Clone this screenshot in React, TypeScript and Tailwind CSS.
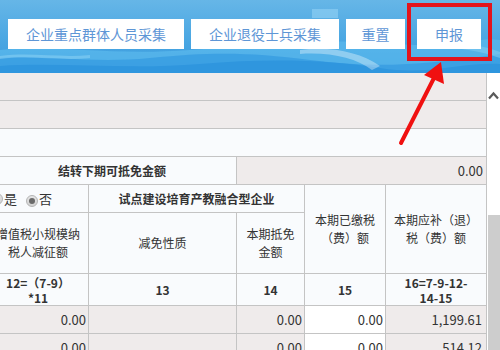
import React from "react";

const G = "bg-[#efebeb]";
const W = "bg-[#f9fbfd]";

function Radio({ checked }: { checked?: boolean }) {
  return (
    <span className="inline-flex h-[12px] w-[12px] items-center justify-center rounded-full border border-[#b4b4b4] bg-gradient-to-b from-[#e6e6e6] to-[#d2d2d2]">
      {checked && <span className="h-[6px] w-[6px] rounded-full bg-[#6a6a6a]" />}
    </span>
  );
}

export default function App() {
  return (
    <div className="relative h-[350px] w-[500px] overflow-hidden bg-white font-['Noto_Sans_CJK_SC',sans-serif] text-[#333]">
      <header className="relative h-[73px] overflow-hidden bg-gradient-to-b from-[#66b6e7] via-[#4ca8e3] to-[#3699dd]">
        <svg className="absolute inset-0" width="500" height="73" viewBox="0 0 500 73">
          <rect x="312" y="9" width="26" height="9" fill="#8ccdf2" opacity="0.7" />
          <path d="M0 50 C 50 44, 110 56, 190 50 S 320 38, 400 44 S 470 36, 500 40 L500 73 L0 73Z" fill="#5ab8ec" opacity="0.75" />
          <path d="M0 58 C 40 54, 90 64, 150 58 S 250 52, 310 60 S 420 66, 500 54 L500 73 L0 73Z" fill="#3a9fe2" opacity="0.9" />
          <path d="M0 66 C 60 62, 130 70, 200 64 S 330 60, 380 68 S 460 62, 500 64 L500 73 L0 73Z" fill="#2f96de" />
          <path d="M300 50 C 330 46, 360 52, 380 66 L372 70 C 356 58, 330 52, 300 54Z" fill="#ffffff" opacity="0.35" />
          <path d="M420 44 C 450 40, 480 44, 500 52 L500 58 C 478 50, 450 46, 420 48Z" fill="#7fcaf2" opacity="0.6" />
          <path d="M0 56 C 30 52, 60 58, 90 55 L90 58 C 60 61, 30 55, 0 59Z" fill="#8fd3f5" opacity="0.5" />
        </svg>
        <div className="relative flex pl-[8px] pt-[19px]">
          <button className="h-[30px] w-[176px] bg-white text-[14px] text-[#5e96d6]">企业重点群体人员采集</button>
          <button className="ml-[7px] h-[30px] w-[148px] bg-white text-[14px] text-[#5e96d6]">企业退役士兵采集</button>
          <button className="ml-[7px] h-[30px] w-[59px] bg-white text-[14px] text-[#5e96d6]">重置</button>
          <button className="ml-[12px] h-[30px] w-[64px] bg-white text-[14px] text-[#5e96d6]">申报</button>
        </div>
      </header>

      <div className="flex">
        <div className="h-[277px] w-[487px] overflow-hidden border-r border-[#c4c4c4]">
          <div className="ml-[-12px] grid w-[498px] grid-cols-[100px_147px_67px_80px_100px] grid-rows-[27px_27px_27px_27px_27px_60px_31px_27px_27px] gap-px bg-[#c4c4c4] text-[12px]">
            <div className={`col-span-5 ${G}`} />
            <div className={`col-span-5 ${G}`} />
            <div className={`col-span-5 ${W}`} />

            <div className={`col-span-2 flex items-center justify-center font-bold ${W}`}>结转下期可抵免金额</div>
            <div className={`col-span-3 flex items-center justify-end pr-[3px] text-[13px] ${G}`}>0.00</div>

            <div className={`flex items-center pl-[3px] text-[13px] ${W}`}>
              <Radio />
              <span className="ml-[1px]">是</span>
              <span className="ml-[9px]"><Radio checked /></span>
              <span className="ml-[1px]">否</span>
            </div>
            <div className={`col-span-2 flex items-center justify-center font-bold ${W}`}>试点建设培育产教融合型企业</div>
            <div className={`row-span-2 flex items-center justify-center text-center leading-[18px] ${W}`}>
              本期已缴税<br />（费）额
            </div>
            <div className={`row-span-2 flex items-center justify-center text-center leading-[18px] ${W}`}>
              本期应补（退）<br />税（费）额
            </div>

            <div className={`flex items-center justify-center text-center leading-[18px] ${W}`}>
              增值税小规模纳<br />税人减征额
            </div>
            <div className={`flex items-center justify-center ${W}`}>减免性质</div>
            <div className={`flex items-center justify-center text-center leading-[18px] ${W}`}>
              本期抵免<br />金额
            </div>

            <div className={`flex items-center justify-center text-center font-bold leading-[15px] ${W}`}>
              12=（7-9）<br />*11
            </div>
            <div className={`flex items-center justify-center font-bold ${W}`}>13</div>
            <div className={`flex items-center justify-center font-bold ${W}`}>14</div>
            <div className={`flex items-center justify-center font-bold ${W}`}>15</div>
            <div className={`flex items-center justify-center text-center font-bold leading-[15px] ${W}`}>
              16=7-9-12-<br />14-15
            </div>

            <div className={`flex items-center justify-end pr-[2px] text-[13px] ${G}`}>0.00</div>
            <div className={G} />
            <div className={`flex items-center justify-end pr-[2px] text-[13px] ${G}`}>0.00</div>
            <div className={`flex items-center justify-end pr-[2px] text-[13px] bg-white`}>0.00</div>
            <div className={`flex items-center justify-end pr-[4px] text-[13px] ${G}`}>1,199.61</div>

            <div className={`flex items-center justify-end pr-[2px] text-[13px] ${G}`}>0.00</div>
            <div className={G} />
            <div className={`flex items-center justify-end pr-[2px] text-[13px] ${G}`}>0.00</div>
            <div className={`flex items-center justify-end pr-[2px] text-[13px] bg-white`}>0.00</div>
            <div className={`flex items-center justify-end pr-[4px] text-[13px] ${G}`}>514.12</div>
          </div>
        </div>

        <div className="flex h-[277px] w-[13px] flex-col bg-white">
          <svg className="ml-[1px] mt-[18px]" width="11" height="9" viewBox="0 0 11 9">
            <polyline points="1,7.5 5.5,2.5 10,7.5" fill="none" stroke="#5a5a5a" strokeWidth="2.2" />
          </svg>
          <div className="ml-[1px] mt-[115px] flex-1 bg-[#cdcdcd]" />
        </div>
      </div>

      <div className="absolute left-[407px] top-[3px] h-[58px] w-[85px] border-[4px] border-[#e3141c]" />
      <svg className="pointer-events-none absolute left-0 top-0" width="500" height="350" viewBox="0 0 500 350">
        <line x1="401" y1="143" x2="435" y2="76" stroke="#f01010" strokeWidth="4" strokeLinecap="round" />
        <polygon points="441,62 444,84 424,75" fill="#f01010" />
      </svg>
    </div>
  );
}
